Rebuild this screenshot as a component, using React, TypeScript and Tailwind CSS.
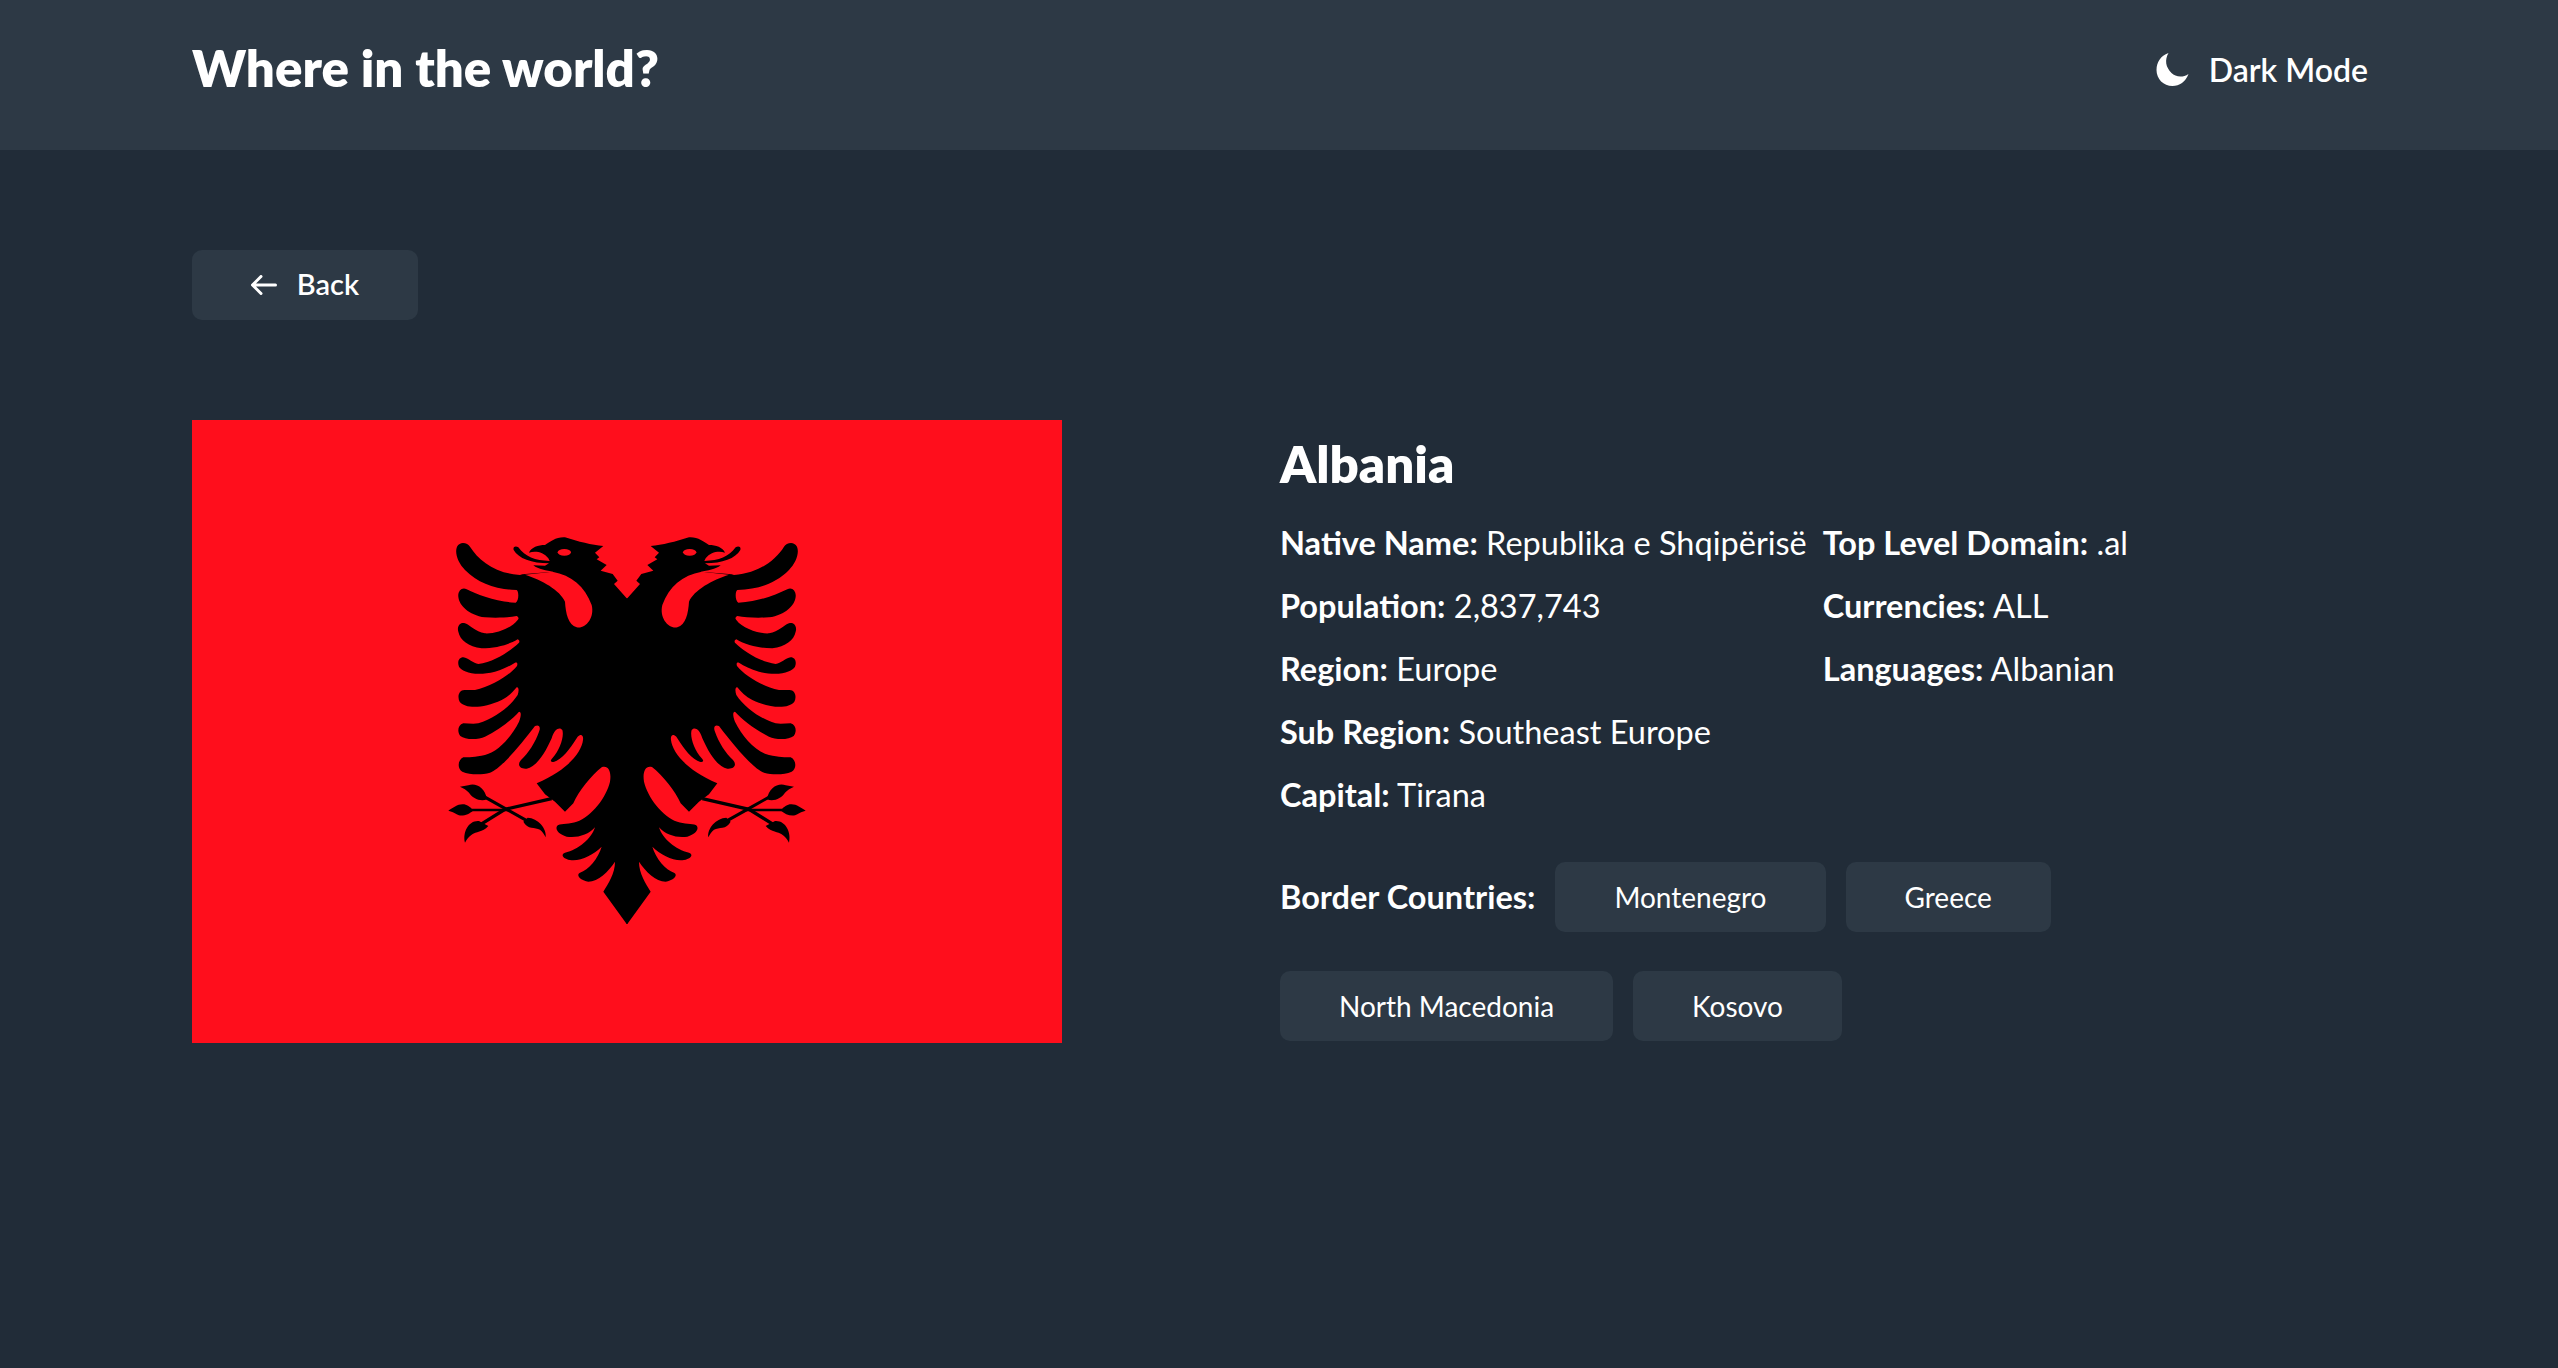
const leftRows = [
  ['Native Name:', 'Republika e Shqipërisë'],
  ['Population:', '2,837,743'],
  ['Region:', 'Europe'],
  ['Sub Region:', 'Southeast Europe'],
  ['Capital:', 'Tirana'],
];

const rightRows = [
  ['Top Level Domain:', '.al'],
  ['Currencies:', 'ALL'],
  ['Languages:', 'Albanian'],
];

const FLAG_RED = '#ff0e1c';

function EagleHalf() {
  return (
    <g>
      {/* head, wing feathers, body and tail in one outline */}
      <path
        fill="#000"
        d="M547 205 L545 205 L507 162 L518 152 L503 132 L467 122 L485 105 L455 88 L463 82 L450 68 L475 48
        C440 45 400 35 360 22 C335 20 315 35 300 45 C280 45 258 52 252 68 C270 62 295 65 310 85 L314 93
        C270 92 240 80 220 52 C212 46 203 50 206 60 C220 85 260 100 312 100 L300 107 L265 106 C280 118 305 122 325 125 L232 133 L225 135
        C150 130 100 90 75 50 C68 38 45 32 36 50 C28 70 40 100 60 120 C100 160 150 178 215 180
        C222 185 222 212 212 218 C150 215 100 195 65 178 C50 170 38 185 40 200 C42 225 70 255 120 262 C160 265 190 262 215 258
        C222 262 222 266 218 270 C200 295 150 312 120 310 C90 305 75 285 60 280 C45 275 35 290 40 305 C45 330 70 350 110 355 C150 355 190 345 218 328
        C224 330 224 335 222 338 C200 360 150 395 100 402 C85 400 70 385 55 382 C42 382 36 395 42 410 C50 425 90 440 150 425 C175 418 195 408 210 398
        C218 396 218 402 216 408 C195 435 140 470 90 480 C75 480 68 480 58 480 C42 480 36 500 44 515 C60 535 110 538 170 510 C190 500 205 485 215 472
        C222 470 222 485 218 495 C195 530 150 565 100 580 C85 582 70 580 55 580 C38 585 36 605 46 618 C60 630 100 630 120 620 C160 600 200 570 222 545
        C230 545 228 560 222 575 C200 620 160 665 120 675 C90 682 70 682 55 682 C38 690 36 715 52 725 C75 735 110 735 135 728 C170 715 230 640 270 588
        C282 582 288 592 282 605 C272 635 250 670 228 690 C215 705 225 718 245 716 C275 710 300 670 320 625 C328 595 345 590 352 600
        C358 620 345 660 322 685 C312 695 320 700 335 692 C360 680 385 640 398 620 C408 610 416 615 414 630 C410 665 370 720 275 760
        L300 793 L330 815 L360 845 L385 820 C400 785 440 735 470 712 C490 705 500 725 495 755 C485 800 440 860 395 875
        C375 882 350 880 340 885 C328 892 335 912 365 920 C395 925 430 915 450 892 C440 925 400 960 360 968 C348 972 350 985 375 990
        C405 995 445 975 470 950 C460 985 430 1020 405 1028 C392 1035 405 1052 430 1055 C460 1055 490 1025 510 995
        C510 1030 490 1060 475 1085 L545 1182 L547 1182 Z"
      />
      {/* neck */}
      <path d="M322 125 C380 135 420 170 440 225 C450 265 420 298 395 292 C370 285 362 250 360 215 C345 180 290 150 240 134 Z" fill={FLAG_RED} />
      <ellipse cx="358" cy="67" rx="20" ry="10" fill={FLAG_RED} />
      {/* talons */}
      <path d="M320 806 L180 838 L88 895" fill="none" stroke="#000" strokeWidth="10" />
      <path d="M100 790 L185 838 L260 880" fill="none" stroke="#000" strokeWidth="9" />
      <path d="M55 840 L195 840" fill="none" stroke="#000" strokeWidth="7" />
      <path d="M10 842 C25 832 40 820 58 823 C75 828 82 838 84 842 C72 853 50 862 35 853 C28 848 20 845 10 842 Z" fill="#000" />
      <path d="M45 770 L70 766 C92 758 120 772 126 808 C105 816 82 804 72 788 C65 780 55 775 45 770 Z" fill="#000" />
      <path d="M60 938 C52 905 72 870 102 873 L130 888 C112 908 92 904 82 913 C72 920 65 928 60 938 Z" fill="#000" />
      <path d="M302 922 C306 895 278 864 248 863 L235 875 C248 900 270 890 285 899 C292 905 297 912 302 922 Z" fill="#000" />
    </g>
  );
}

function AlbaniaFlag() {
  return (
    <svg viewBox="0 0 870 623" className="w-[870px] h-[623px] shrink-0 block">
      <rect width="870" height="623" fill={FLAG_RED} />
      <g transform="translate(253,110) scale(0.33333)" className="blur-[0.6px]">
        <EagleHalf />
        <g transform="translate(1092,0) scale(-1,1)">
          <EagleHalf />
        </g>
      </g>
    </svg>
  );
}

function Chip({ label }: { label: string }) {
  return (
    <button
      type="button"
      className="h-[70px] px-[59px] rounded-[10px] bg-[#2d3945] text-[28px] text-white whitespace-nowrap"
    >
      {label}
    </button>
  );
}

export default function App() {
  return (
    <div className="min-h-screen bg-[#212c38] text-white font-['Lato','Noto_Sans',sans-serif]">
      <header className="h-[150px] bg-[#2d3945] pl-[192px] pr-[190px] flex items-center justify-between">
        <h1 className="text-[51px] font-extrabold pb-[13px]">Where in the world?</h1>
        <button type="button" className="flex items-center gap-[20px] text-[32px] font-semibold pb-[11px]">
          <svg viewBox="0 0 32 33" className="w-[33px] h-[33px]" fill="#fff">
            <path d="M12 0 C4 3 0 9 0 17 C0 26 7 33 16 33 C23 33 29 29 32 21 C26 25 19 24 15 20 C9 14 8 7 12 0 Z" />
          </svg>
          <span>Dark Mode</span>
        </button>
      </header>

      <main className="px-[192px] pt-[100px]">
        <button
          type="button"
          className="w-[226px] h-[70px] rounded-[10px] bg-[#2d3945] flex items-center justify-center gap-[20px] text-[29px] font-semibold pb-[2px]"
        >
          <svg viewBox="0 0 26 20" className="w-[26px] h-[20px] mt-[2px]" fill="none" stroke="#fff" strokeWidth="3" strokeLinecap="round" strokeLinejoin="round">
            <path d="M24.5 10 H2 M10 1.5 L1.5 10 L10 18.5" />
          </svg>
          Back
        </button>

        <div className="flex gap-[218px] mt-[100px]">
          <AlbaniaFlag />

          <section className="flex-1">
            <h2 className="text-[51px] font-extrabold leading-[65px] pt-[11px] mb-[25px]">Albania</h2>
            <div className="flex gap-[16px] text-[32.5px] leading-[43px]">
              <div className="flex flex-col gap-[20px]">
                {leftRows.map(([k, v]) => (
                  <p key={k} className="whitespace-nowrap">
                    <span className="font-bold">{k}</span> <span className="font-normal">{v}</span>
                  </p>
                ))}
              </div>
              <div className="flex flex-col gap-[20px]">
                {rightRows.map(([k, v]) => (
                  <p key={k} className="whitespace-nowrap">
                    <span className="font-bold">{k}</span> <span className="font-normal">{v}</span>
                  </p>
                ))}
              </div>
            </div>
            <div className="flex flex-wrap items-center gap-x-[20px] gap-y-[39px] mt-[46px] w-[800px]">
              <span className="text-[32.5px] font-bold">Border Countries:</span>
              <Chip label="Montenegro" />
              <Chip label="Greece" />
              <Chip label="North Macedonia" />
              <Chip label="Kosovo" />
            </div>
          </section>
        </div>
      </main>
    </div>
  );
}
